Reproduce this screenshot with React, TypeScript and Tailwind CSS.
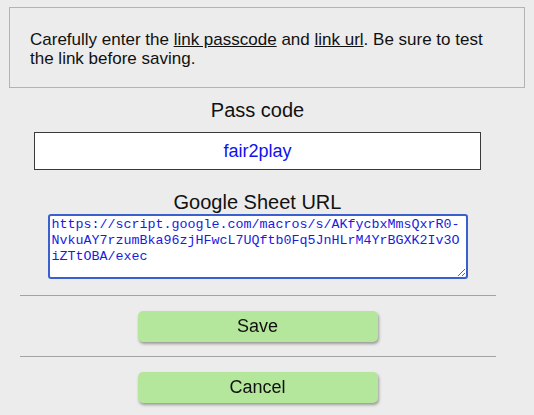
import { useEffect, useRef, useState } from "react";

const url =
  "https://script.google.com/macros/s/AKfycbxMmsQxrR0-NvkuAY7rzumBka96zjHFwcL7UQftb0Fq5JnHLrM4YrBGXK2Iv3OiZTtOBA/exec";

export default function App() {
  const [code, setCode] = useState("fair2play");
  const [link, setLink] = useState(url);
  const areaRef = useRef<HTMLTextAreaElement>(null);

  useEffect(() => {
    const el = areaRef.current;
    if (el) {
      el.focus();
      el.setSelectionRange(el.value.length, el.value.length);
    }
  }, []);

  return (
    <div className="h-[415px] bg-[#ececec] pt-[7px] text-[#111] font-['Liberation_Sans',Arial,sans-serif]">
      <div className="mx-[9px] h-[81px] border border-[#b3b3b3] pl-[20px] pr-[32px] pt-[22px] text-[17px] leading-[19px]">
        Carefully enter the <span className="underline">link passcode</span> and{" "}
        <span className="underline">link url</span>. Be sure to test the link before saving.
      </div>

      <div className="w-[515px] flex flex-col items-center">
        <div className="mt-[10px] text-[20px] leading-[24px]">Pass code</div>
        <input
          value={code}
          onChange={(e) => setCode(e.target.value)}
          className="mt-[10px] h-[38px] w-[447px] border border-[#3a3a3a] bg-white text-center text-[18px] text-[#1010f0] outline-none"
        />

        <div className="mt-[21px] text-[20px] leading-[23px]">Google Sheet URL</div>
        <textarea
          ref={areaRef}
          value={link}
          onChange={(e) => setLink(e.target.value)}
          spellCheck={false}
          className="h-[65px] w-[420px] rounded-[3px] border-2 border-[#3a5fcf] bg-white px-[2px] py-[1px] font-['Liberation_Mono','Courier_New',monospace] text-[13.33px] leading-[16px] text-[#1a1ae0] caret-black outline-none"
        />

        <div className="mt-[16px] w-[476px] border-t border-[#a3a3a3]" />
        <button className="mt-[15px] h-[31px] w-[240px] rounded-[5px] bg-[#b4e69c] text-[18px] text-[#111] shadow-[1px_2px_3px_rgba(0,0,0,0.35)]">
          Save
        </button>
        <div className="mt-[14px] w-[476px] border-t border-[#a3a3a3]" />
        <button className="mt-[15px] h-[31px] w-[240px] rounded-[5px] bg-[#b4e69c] text-[18px] text-[#111] shadow-[1px_2px_3px_rgba(0,0,0,0.35)]">
          Cancel
        </button>
      </div>
    </div>
  );
}
